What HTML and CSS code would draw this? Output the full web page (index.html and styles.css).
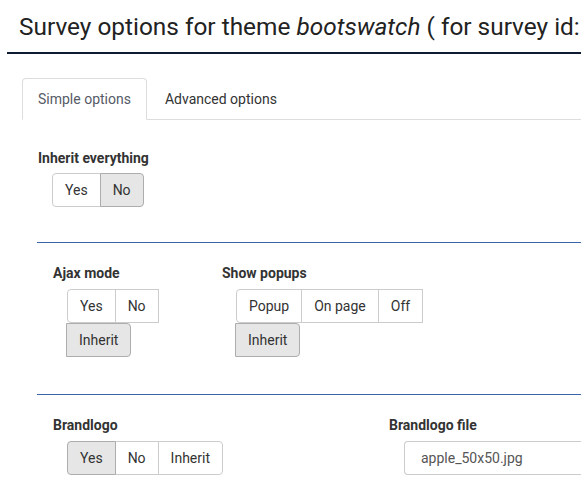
FILE: index.html
```html
<!DOCTYPE html>
<html lang="en">
<head>
<meta charset="utf-8">
<title>Theme options</title>
<link rel="stylesheet" href="styles.css">
</head>
<body>
<div class="page">
  <div class="pagetitle">
    <h3>Survey options for theme <em>bootswatch</em> ( for survey id:</h3>
  </div>

  <div class="tabs">
    <ul class="nav-tabs">
      <li class="tab active">Simple options</li>
      <li class="tab">Advanced options</li>
    </ul>
  </div>

  <div class="pane">
    <div class="field inherit-all">
      <div class="label">Inherit everything</div>
      <div class="btn-group">
        <span class="btn">Yes</span>
        <span class="btn active">No</span>
      </div>
    </div>

    <hr class="sep">

    <div class="row row-a">
      <div class="field">
        <div class="label">Ajax mode</div>
        <div class="btn-group narrow">
          <span class="btn">Yes</span>
          <span class="btn">No</span>
          <span class="btn active">Inherit</span>
        </div>
      </div>
      <div class="field">
        <div class="label">Show popups</div>
        <div class="btn-group medium">
          <span class="btn">Popup</span>
          <span class="btn">On page</span>
          <span class="btn">Off</span>
          <span class="btn active">Inherit</span>
        </div>
      </div>
    </div>

    <hr class="sep">

    <div class="row row-b">
      <div class="field">
        <div class="label">Brandlogo</div>
        <div class="btn-group">
          <span class="btn active">Yes</span>
          <span class="btn">No</span>
          <span class="btn">Inherit</span>
        </div>
      </div>
      <div class="field">
        <div class="label">Brandlogo file</div>
        <div class="control">
          <div class="input">apple_50x50.jpg</div>
        </div>
      </div>
    </div>
  </div>
</div>
</body>
</html>
```

FILE: styles.css
```css
html, body {
  margin: 0;
  padding: 0;
  background: #ffffff;
}

body {
  font-family: Roboto, "Liberation Sans", sans-serif;
  font-size: 14px;
  line-height: 20px;
  color: #333333;
  overflow: hidden;
  width: 581px;
}

.page {
  width: 581px;
}

/* Page heading with the dark rule underneath */
.pagetitle {
  margin-left: 7px;
  padding-left: 12px;
  border-bottom: 2px solid #0e1b33;
  white-space: nowrap;
  overflow: hidden;
}

.pagetitle h3 {
  margin: 0;
  padding: 12px 0 10px;
  font-size: 24.4px;
  line-height: 30px;
  font-weight: 400;
  color: #222222;
}

.pagetitle em {
  font-style: italic;
}

/* Tab strip */
.tabs {
  margin: 24px 0 0 22px;
}

.nav-tabs {
  display: flex;
  margin: 0;
  padding: 0;
  list-style: none;
  border-bottom: 1px solid #dddddd;
}

.tab {
  margin-right: 2px;
  margin-bottom: -1px;
  padding: 10px 15px;
  border: 1px solid transparent;
  border-radius: 4px 4px 0 0;
  color: #333333;
}

.tab.active {
  border-color: #dddddd;
  border-bottom-color: #ffffff;
  background: #ffffff;
  color: #555a66;
}

/* Options pane */
.pane {
  padding-left: 37px;
}

.inherit-all {
  margin-top: 28px;
  padding-left: 1px;
}

.label {
  font-size: 14px;
  font-weight: 700;
  line-height: 20px;
  color: #333333;
}

.sep {
  margin: 35px 0 0;
  border: 0;
  border-top: 1px solid #3a62a6;
}

.row {
  display: grid;
  padding-left: 16px;
}

.row-a {
  grid-template-columns: 169px 1fr;
  margin-top: 20px;
}

.row-a + .sep {
  margin-top: 37px;
}

.row-b {
  grid-template-columns: 336px 1fr;
  margin-top: 20px;
}

.field .btn-group,
.field .control {
  margin-left: 14px;
  margin-top: 6px;
}

.inherit-all.field .btn-group {
  margin-top: 5px;
}

/* Button groups */
.btn-group {
  display: flex;
  flex-wrap: wrap;
  width: max-content;
}

.btn-group.narrow {
  width: 100px;
}

.btn-group.medium {
  width: 200px;
}

.btn {
  display: block;
  padding: 6px 12px;
  line-height: 20px;
  font-size: 14px;
  color: #333333;
  background: #ffffff;
  border: 1px solid #cccccc;
  white-space: nowrap;
}

.btn + .btn {
  margin-left: -1px;
}

.btn:first-child {
  border-radius: 4px 0 0 4px;
}

.btn:last-child {
  border-radius: 0 4px 4px 0;
}

.btn.active {
  background: #e6e6e6;
  border-color: #adadad;
  position: relative;
  z-index: 1;
}

/* File name field */
.field .control {
  margin-left: 15px;
}

.input {
  height: 20px;
  padding: 6px 16px;
  border: 1px solid #cccccc;
  border-right: 0;
  border-radius: 4px 0 0 4px;
  color: #555555;
  font-size: 14px;
  line-height: 20px;
}
```
